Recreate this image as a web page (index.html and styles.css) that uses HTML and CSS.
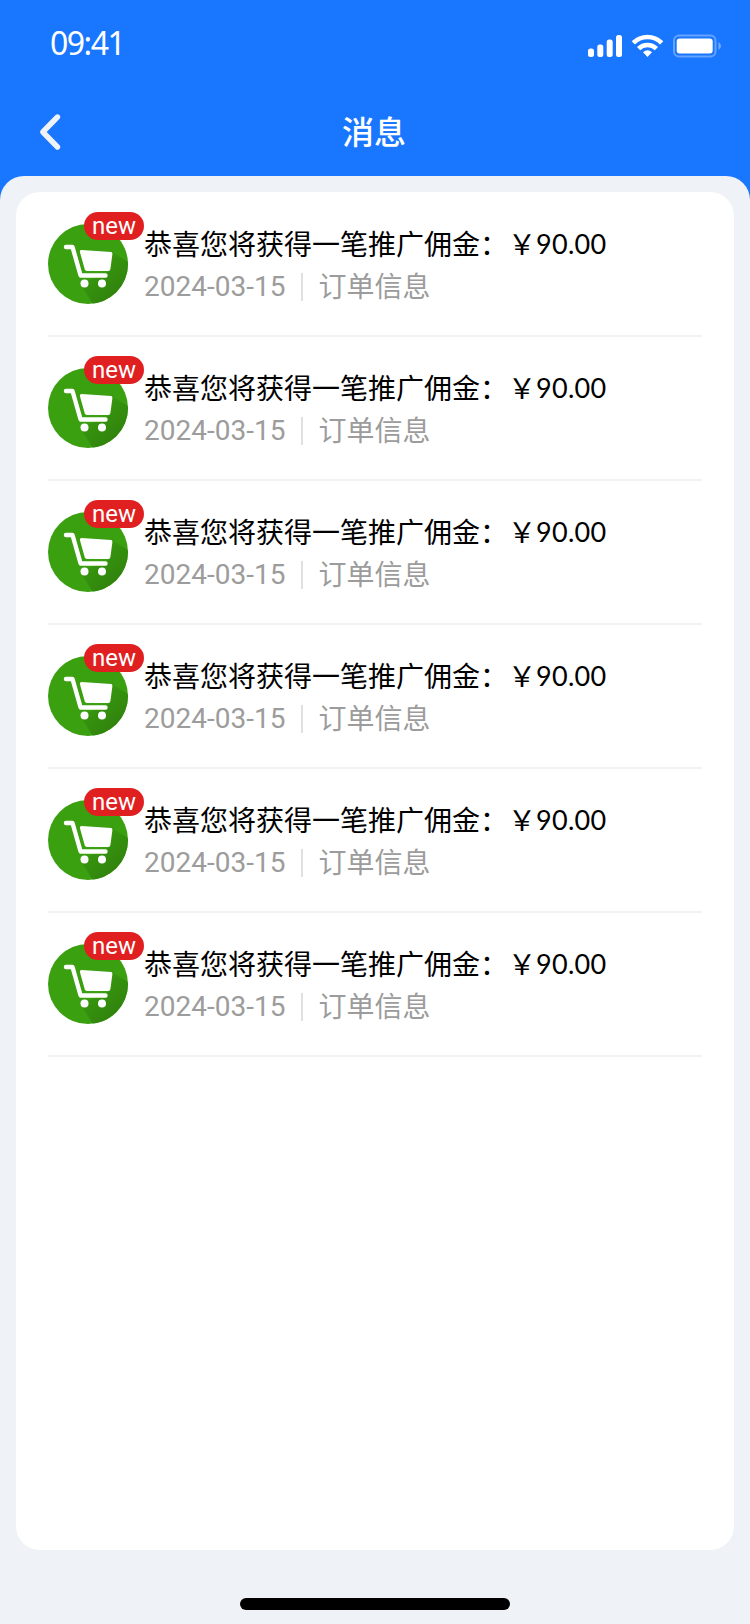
FILE: index.html
```html
<!DOCTYPE html>
<html lang="zh-CN">
<head>
<meta charset="utf-8">
<title>消息</title>
<link rel="stylesheet" href="styles.css">
</head>
<body>
<svg class="defs" width="0" height="0" aria-hidden="true">
  <defs>
    <linearGradient id="shade" x1="44" y1="44" x2="66" y2="68" gradientUnits="userSpaceOnUse">
      <stop offset="0" stop-color="#38980f"/>
      <stop offset="1" stop-color="#31850c"/>
    </linearGradient>
    <clipPath id="disc"><circle cx="40" cy="40" r="40"/></clipPath>
    <symbol id="cart" viewBox="0 0 80 80">
      <circle cx="40" cy="40" r="40" fill="#3aa010"/>
      <path d="M64 28L80 38V80H45L32 60L62 47Z" fill="url(#shade)" clip-path="url(#disc)"/>
      <path d="M18 23H24.5L32.6 51.5H57.5" fill="none" stroke="#fff" stroke-width="4.4" stroke-linecap="round" stroke-linejoin="round"/>
      <path d="M33.5 26L63 28Q64.5 28.2 64.4 30L62.4 45Q62.1 47 60 47H39Q37.2 47 36.7 45.2L31.9 28Q31.6 26 33.5 26Z" fill="#fff"/>
      <circle cx="36.5" cy="59.5" r="4" fill="#fff"/>
      <circle cx="54" cy="59.5" r="4" fill="#fff"/>
    </symbol>
  </defs>
</svg>
<div class="screen">
  <header class="header">
    <div class="status">
      <span class="time">09:41</span>
      <svg class="status-icons" width="138" height="26" viewBox="0 0 138 26">
        <g fill="#fff">
          <rect x="0" y="15.5" width="6" height="8.500" rx="2.500"/>
          <rect x="9.300" y="11.500" width="6" height="12.500" rx="2.500"/>
          <rect x="18.700" y="6.500" width="6" height="17.500" rx="2.500"/>
          <rect x="28" y="2" width="6" height="22" rx="2.500"/>
        </g>
        <g fill="none" stroke="#fff" stroke-width="4.600">
          <path d="M45.300 9.800a20.200 20.200 0 0 1 28.400 0"/>
          <path d="M50.600 15.600a12.700 12.700 0 0 1 17.800 0"/>
        </g>
        <path d="M55 19.200Q59.500 15.400 64 19.200L59.500 24Z" fill="#fff"/>
        <rect x="86" y="2.500" width="41.500" height="21" rx="5" fill="none" stroke="#fff" stroke-opacity=".33" stroke-width="2"/>
        <rect x="88.700" y="5.500" width="36" height="15" rx="3" fill="#fff"/>
        <path d="M130.500 9Q133 10.500 133 13T130.500 17Z" fill="#fff" fill-opacity=".4"/>
      </svg>
    </div>
    <nav class="navbar">
      <svg class="back" width="24" height="38" viewBox="0 0 24 38"><path d="M18.500 4L3.800 19L18.500 34" fill="none" stroke="#eff2f7" stroke-width="5.400" stroke-linecap="round" stroke-linejoin="round"/></svg>
      <h1 class="title">消息</h1>
    </nav>
  </header>
  <main class="sheet">
    <ul class="card">
      <li class="row"><div class="avatar"><svg class="cart"><use href="#cart"/></svg><span class="badge">new</span></div><div class="info"><p class="headline"><span>恭喜您将获得一笔推广佣金：￥</span><span class="amount">90.00</span></p><p class="meta"><span class="date">2024-03-15</span><i class="divider"></i><span class="kind">订单信息</span></p></div></li>
      <li class="row"><div class="avatar"><svg class="cart"><use href="#cart"/></svg><span class="badge">new</span></div><div class="info"><p class="headline"><span>恭喜您将获得一笔推广佣金：￥</span><span class="amount">90.00</span></p><p class="meta"><span class="date">2024-03-15</span><i class="divider"></i><span class="kind">订单信息</span></p></div></li>
      <li class="row"><div class="avatar"><svg class="cart"><use href="#cart"/></svg><span class="badge">new</span></div><div class="info"><p class="headline"><span>恭喜您将获得一笔推广佣金：￥</span><span class="amount">90.00</span></p><p class="meta"><span class="date">2024-03-15</span><i class="divider"></i><span class="kind">订单信息</span></p></div></li>
      <li class="row"><div class="avatar"><svg class="cart"><use href="#cart"/></svg><span class="badge">new</span></div><div class="info"><p class="headline"><span>恭喜您将获得一笔推广佣金：￥</span><span class="amount">90.00</span></p><p class="meta"><span class="date">2024-03-15</span><i class="divider"></i><span class="kind">订单信息</span></p></div></li>
      <li class="row"><div class="avatar"><svg class="cart"><use href="#cart"/></svg><span class="badge">new</span></div><div class="info"><p class="headline"><span>恭喜您将获得一笔推广佣金：￥</span><span class="amount">90.00</span></p><p class="meta"><span class="date">2024-03-15</span><i class="divider"></i><span class="kind">订单信息</span></p></div></li>
      <li class="row"><div class="avatar"><svg class="cart"><use href="#cart"/></svg><span class="badge">new</span></div><div class="info"><p class="headline"><span>恭喜您将获得一笔推广佣金：￥</span><span class="amount">90.00</span></p><p class="meta"><span class="date">2024-03-15</span><i class="divider"></i><span class="kind">订单信息</span></p></div></li>
    </ul>
    <div class="home-indicator"></div>
  </main>
</div>
</body>
</html>
```
FILE: styles.css
```css
* { box-sizing: border-box; margin: 0; padding: 0; }
body { background: #1876ff; font-family: "Noto Sans CJK SC", sans-serif; }
.defs { display: block; }
.screen { width: 750px; height: 1624px; display: flex; flex-direction: column; overflow: hidden; }
.header { height: 176px; color: #fff; }
.status { height: 88px; display: flex; justify-content: space-between; padding: 0 24px 0 50px; }
.time { font: 32px/40px "Noto Sans", sans-serif; letter-spacing: -1.5px; padding-top: 23px; }
.status-icons { margin-top: 33px; }
.navbar { height: 88px; display: grid; grid-template-columns: 1fr auto 1fr; align-items: center; padding: 0 40px 0 39px; }
.title { grid-column: 2; font-size: 32px; line-height: 48px; font-weight: 500; padding-bottom: 4px; margin-left: -1px; }
.sheet { flex: 1; background: #eff2f7; border-radius: 24px 24px 0 0; padding: 16px 16px 0; display: flex; flex-direction: column; align-items: center; }
.card { width: 718px; height: 1358px; background: #fff; border-radius: 24px; padding: 0 32px 0; list-style: none; }
.row { height: 144px; display: flex; gap: 16px; padding-top: 32px; position: relative; }
.row::after { content: ""; position: absolute; left: 0; right: 0; top: 143px; height: 2px; background: #f2f2f2; }
.avatar { position: relative; width: 80px; height: 80px; }
.cart { display: block; width: 80px; height: 80px; }
.badge { position: absolute; left: 36px; top: -12px; width: 60px; height: 28px; border-radius: 14px; background: #e02020; color: #fff; font: 24px/28px Roboto, sans-serif; text-align: center; }
.info { white-space: nowrap; font-size: 28px; }
.headline { color: #000; height: 42px; line-height: 38px; }
.amount { font-family: Lato, sans-serif; font-size: 27px; letter-spacing: .3px; vertical-align: 1px; line-height: 1; }
.meta { display: flex; align-items: center; height: 42px; line-height: 42px; color: #9c9c9c; }
.date { font-family: Roboto, sans-serif; }
.divider { width: 2px; height: 28px; margin: 0 15px 0 16px; background: #e0e0e0; }
.kind { padding-bottom: 4px; }
.home-indicator { width: 270px; height: 12px; border-radius: 6px; background: #000; margin-top: 48px; }
```
